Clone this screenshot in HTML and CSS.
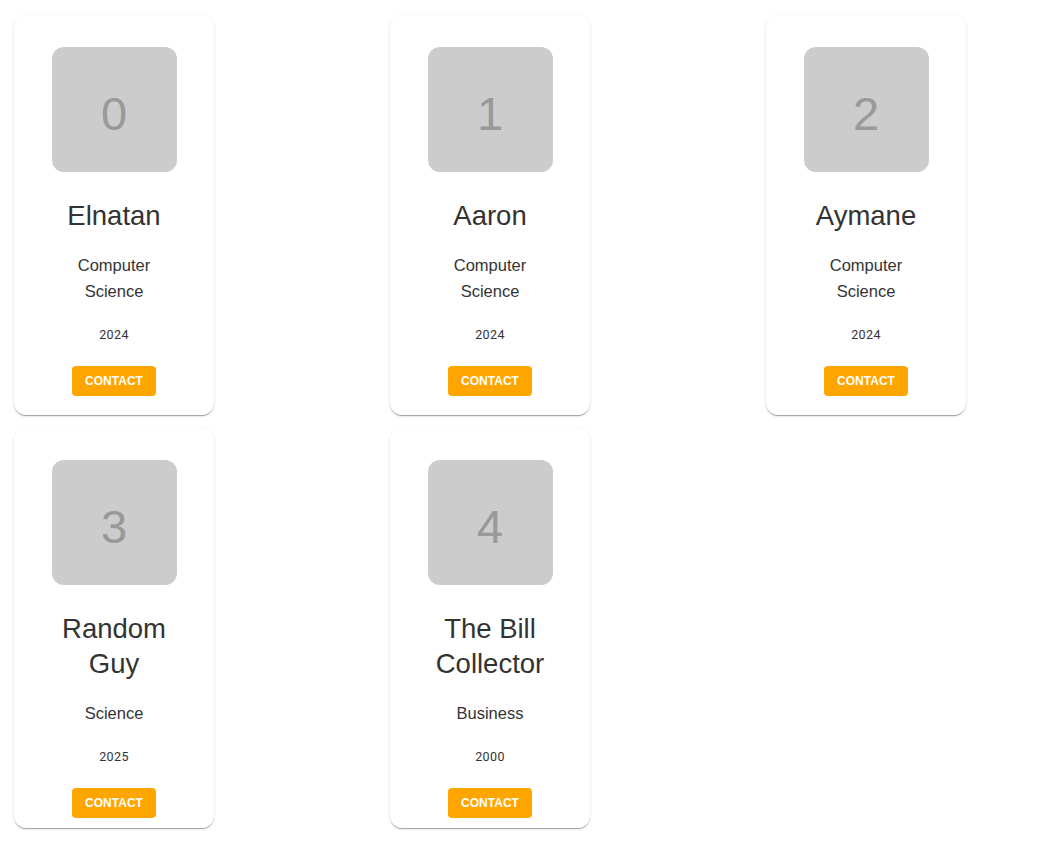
FILE: index.html
```html
<!DOCTYPE html>
<html lang="en">
<head>
<meta charset="utf-8">
<title>Profiles</title>
<link rel="stylesheet" href="styles.css">
</head>
<body>
<div class="grid">
  <div class="card">
    <div class="avatar">0</div>
    <div class="name">Elnatan</div>
    <div class="major">Computer Science</div>
    <div class="year">2024</div>
    <button class="contact">Contact</button>
  </div>
  <div class="card">
    <div class="avatar">1</div>
    <div class="name">Aaron</div>
    <div class="major">Computer Science</div>
    <div class="year">2024</div>
    <button class="contact">Contact</button>
  </div>
  <div class="card">
    <div class="avatar">2</div>
    <div class="name">Aymane</div>
    <div class="major">Computer Science</div>
    <div class="year">2024</div>
    <button class="contact">Contact</button>
  </div>
  <div class="card">
    <div class="avatar">3</div>
    <div class="name">Random Guy</div>
    <div class="major">Science</div>
    <div class="year">2025</div>
    <button class="contact">Contact</button>
  </div>
  <div class="card">
    <div class="avatar">4</div>
    <div class="name">The Bill Collector</div>
    <div class="major">Business</div>
    <div class="year">2000</div>
    <button class="contact">Contact</button>
  </div>
</div>
</body>
</html>
```

FILE: styles.css
```css
html, body {
  margin: 0;
  background: #fff;
}

body {
  padding: 15px 14px;
  font-family: "Liberation Sans", Arial, sans-serif;
  color: #333;
}

.grid {
  display: grid;
  grid-template-columns: repeat(3, 200px);
  column-gap: 176px;
  row-gap: 13px;
}

.card {
  box-sizing: border-box;
  width: 200px;
  height: 400px;
  padding: 32px 37px 0;
  border-radius: 12px;
  background: #fff;
  box-shadow: 0 2px 1px -1px rgba(0,0,0,0.2), 0 1px 1px 0 rgba(0,0,0,0.14), 0 1px 3px 0 rgba(0,0,0,0.12);
  display: flex;
  flex-direction: column;
  align-items: center;
  text-align: center;
}

.avatar {
  flex: none;
  box-sizing: border-box;
  width: 125px;
  height: 125px;
  padding-top: 8px;
  border-radius: 12px;
  background: #cccccc;
  color: #999999;
  font-size: 47px;
  display: flex;
  align-items: center;
  justify-content: center;
}

.name {
  margin-top: 26px;
  font-size: 27.5px;
  line-height: 35px;
  width: 125px;
}

.major {
  margin-top: 19px;
  font-size: 16.5px;
  line-height: 26px;
  width: 125px;
}

.year {
  margin-top: 22px;
  font-family: Roboto, "Liberation Sans", sans-serif;
  font-size: 12.5px;
  letter-spacing: 0.4px;
  line-height: 18px;
}

.contact {
  margin-top: 22px;
  height: 30px;
  padding: 0 13px;
  border: none;
  border-radius: 4px;
  background: #ffa500;
  color: #fff;
  font-family: "Liberation Sans", Arial, sans-serif;
  font-weight: bold;
  font-size: 12px;
  text-transform: uppercase;
  cursor: pointer;
}
```
